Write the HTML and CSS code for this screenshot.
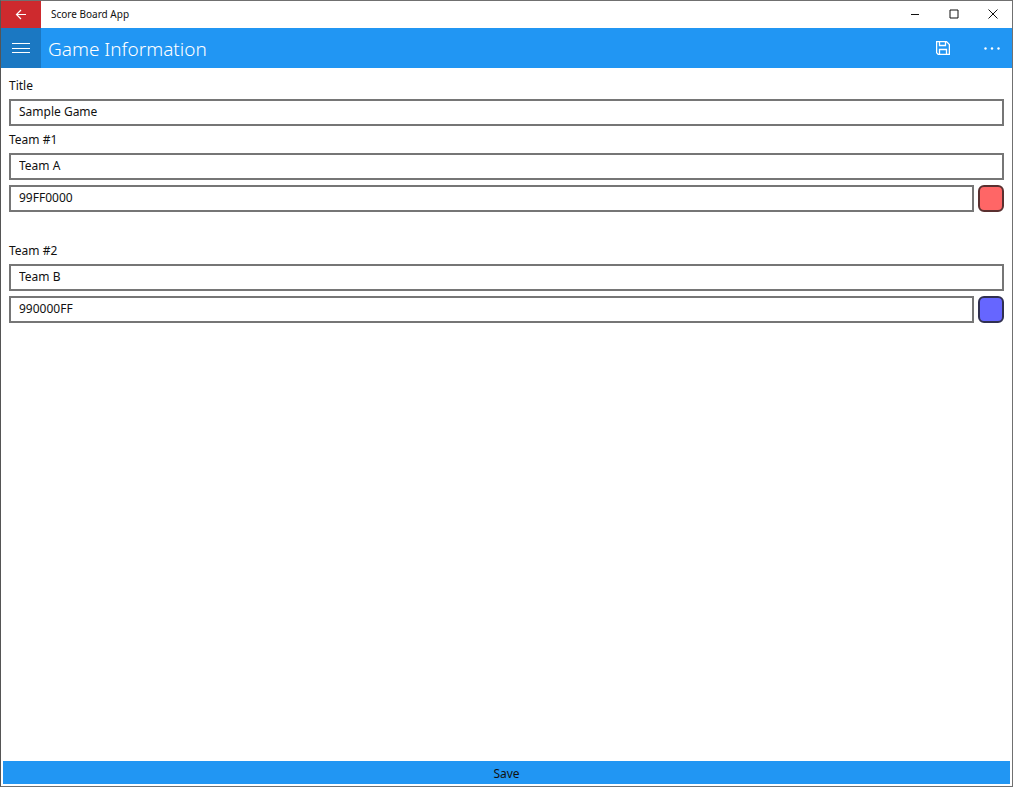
FILE: index.html
```html
<!DOCTYPE html>
<html lang="en">

<head>
    <meta charset="UTF-8">
    <meta name="viewport" content="width=device-width, initial-scale=1.0">
    <title>Score Board App</title>
    <link rel="stylesheet" href="styles.css">
</head>

<body>
    <div class="window">
        <div class="titlebar">
            <button class="back" type="button" aria-label="Back">
                <svg width="12" height="12" viewBox="0 0 12 12"><path d="M11 5.5H1.5M6 1L1.5 5.5L6 10" /></svg>
            </button>
            <span class="app-name">Score Board App</span>
            <button class="caption" type="button" aria-label="Minimize">
                <svg width="10" height="10" viewBox="0 0 10 10"><path d="M1 5.5H9" /></svg>
            </button>
            <button class="caption" type="button" aria-label="Maximize">
                <svg width="10" height="10" viewBox="0 0 10 10"><path d="M1 1H9V9H1Z" /></svg>
            </button>
            <button class="caption" type="button" aria-label="Close">
                <svg width="10" height="10" viewBox="0 0 10 10"><path d="M.5 .5L9.5 9.5M9.5 .5L.5 9.5" /></svg>
            </button>
        </div>
        <header class="header">
            <button class="menu" type="button" aria-label="Menu">
                <svg width="18" height="12" viewBox="0 0 18 12"><path d="M0 1.5H18M0 6.5H18M0 10.5H18" /></svg>
            </button>
            <h1 class="page-title">Game Information</h1>
            <button class="command save-command" type="button" aria-label="Save game">
                <svg width="14" height="14" viewBox="0 0 14 14"><path d="M.6 .6H10.5L13.4 3.5V13.4H2.2L.6 11.8ZM3.5 .6V4.5H9.5V.6M3.5 13.4V8.5H10.5V13.4" /></svg>
            </button>
            <button class="command" type="button" aria-label="More">
                <svg class="dots" width="16" height="4" viewBox="0 0 16 4"><circle cx="1.5" cy="2.5" r="1.2" /><circle cx="8" cy="2.5" r="1.2" /><circle cx="14.5" cy="2.5" r="1.2" /></svg>
            </button>
        </header>
        <form class="game">
            <div class="fields">
                <label for="title">Title</label>
                <input id="title" type="text" value="Sample Game">
            </div>
            <div class="fields">
                <label for="team1">Team #1</label>
                <input id="team1" type="text" value="Team A">
                <div class="color-row">
                    <input type="text" aria-label="Team 1 color" value="99FF0000">
                    <span class="swatch red"></span>
                </div>
            </div>
            <div class="fields team-two">
                <label for="team2">Team #2</label>
                <input id="team2" type="text" value="Team B">
                <div class="color-row">
                    <input type="text" aria-label="Team 2 color" value="990000FF">
                    <span class="swatch blue"></span>
                </div>
            </div>
            <button class="save" type="button">Save</button>
        </form>
    </div>
</body>

</html>
```
FILE: styles.css
```css
* {
    box-sizing: border-box;
}

body {
    margin: 0;
    font-family: "Noto Sans", "Open Sans", sans-serif;
    font-size: 12px;
    color: #111;
    background: #FFF;
}

button {
    display: flex;
    align-items: center;
    justify-content: center;
    padding: 0;
    border: none;
    background: none;
    font: inherit;
    color: inherit;
    cursor: pointer;
}

svg {
    fill: none;
    stroke: currentColor;
}

.window {
    display: flex;
    flex-direction: column;
    min-height: 100vh;
    border: 1px solid #707070;
    border-left-color: #555;
}

.titlebar {
    display: flex;
    height: 27px;
}

.back {
    width: 40px;
    background: #CE2A2E;
    color: #FFF;
}

.back svg {
    stroke-width: 1.2;
}

.app-name {
    flex: 1;
    padding-left: 10px;
    font-size: 10px;
    line-height: 26px;
}

.caption {
    width: 39px;
    padding-bottom: 1px;
}

.header {
    display: flex;
    height: 40px;
    background: #2196F3;
    color: #FFF;
}

.menu {
    width: 40px;
    background: #1B78C2;
}

.page-title {
    flex: 1;
    margin: 0;
    padding-left: 7px;
    font-size: 19px;
    font-weight: 300;
    line-height: 42px;
}

.command {
    width: 40px;
}

.save-command {
    width: 58px;
}

.save-command svg {
    stroke-width: 1.3;
}

.dots {
    fill: currentColor;
    stroke: none;
}

.game {
    flex: 1;
    display: flex;
    flex-direction: column;
    padding: 9px 1px 2px;
}

.fields {
    display: flex;
    flex-direction: column;
    margin: 0 7px 5px;
}

.team-two {
    margin-top: 25px;
}

label {
    margin-bottom: 4px;
    line-height: 18px;
}

input[type="text"] {
    width: 100%;
    min-width: 0;
    height: 27px;
    padding: 0 8px 2px;
    border: 2px solid #767676;
    border-radius: 0;
    background: #FFF;
    color: inherit;
    font: inherit;
}

.color-row {
    display: flex;
    gap: 4px;
    margin-top: 5px;
}

.swatch {
    flex: none;
    width: 26px;
    height: 27px;
    border: 2px solid #333;
    border-radius: 6px;
}

.red {
    background: #FF6666;
    border-color: #5A3030;
}

.blue {
    background: #6666FF;
    border-color: #303050;
}

.save {
    height: 23px;
    margin: auto 1px 0;
    padding-top: 1px;
    background: #2196F3;
}
```
